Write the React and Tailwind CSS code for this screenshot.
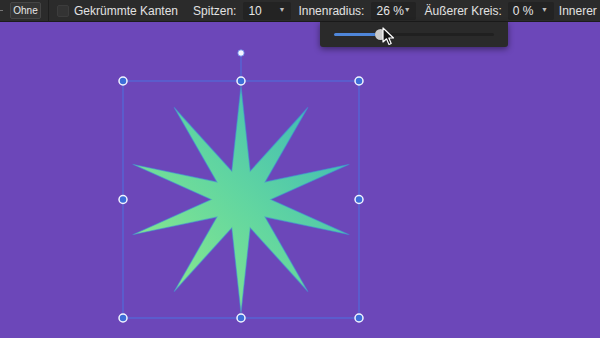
import React from "react";

const CX = 241;
const CY = 199.5 - 22;
const R = 114;
const r = 30;

function starPoints() {
  const pts = [];
  for (let i = 0; i < 20; i++) {
    const a = -Math.PI / 2 + (i * Math.PI) / 10;
    const rad = i % 2 === 0 ? R : r;
    pts.push(`${(CX + rad * Math.cos(a)).toFixed(2)},${(CY + rad * Math.sin(a)).toFixed(2)}`);
  }
  return pts.join(" ");
}

function Field({ value, width }) {
  return (
    <div
      className="flex h-[18px] items-center justify-between rounded-[2px] bg-[#232323] pl-[5px] pr-[6px] text-[12px] text-[#e6e6e6]"
      style={{ width }}
    >
      <span>{value}</span>
      <span className="text-[7px] text-[#bdbdbd]">▼</span>
    </div>
  );
}

export default function App() {
  const handles = [
    [123, 81],
    [241, 81],
    [359, 81],
    [123, 199.5],
    [359, 199.5],
    [123, 318],
    [241, 318],
    [359, 318],
  ];
  return (
    <div
      className="relative flex h-[338px] w-[600px] flex-col overflow-hidden bg-[#6c47b9]"
      style={{ fontFamily: '"Liberation Sans", Arial, sans-serif' }}
    >
      {/* toolbar */}
      <div className="flex h-[22px] shrink-0 items-center whitespace-nowrap border-b border-[#1c1c1c] bg-[#2b2b2b] text-[12px] text-[#e2e2e2]">
        <div className="h-px w-[3px] bg-[#777]" />
        <div className="ml-[7px] flex h-[17px] w-[31px] items-center justify-center rounded-[2px] border border-[#454545] bg-[#343434] text-[10px] text-[#e8e8e8]">
          Ohne
        </div>
        <div className="ml-[7px] h-[22px] w-px bg-[#1e1e1e]" />
        <div className="ml-[8px] h-[12px] w-[12px] rounded-[2px] border border-[#3c3c3c] bg-[#333]" />
        <span className="ml-[5px]">Gekrümmte Kanten</span>
        <span className="ml-[15px]">Spitzen:</span>
        <div className="ml-[7px]">
          <Field value="10" width={48} />
        </div>
        <span className="ml-[7px]">Innenradius:</span>
        <div className="ml-[7px]">
          <Field value="26 %" width={45} />
        </div>
        <span className="ml-[8px]">Äußerer Kreis:</span>
        <div className="ml-[6px]">
          <Field value="0 %" width={46} />
        </div>
        <span className="ml-[5px]">Innerer</span>
      </div>

      {/* canvas */}
      <div className="relative flex-1">
        <svg className="absolute left-0 top-0" width="600" height="316" viewBox="0 0 600 316">
          <defs>
            <linearGradient id="sg" x1="0" y1="1" x2="1" y2="0">
              <stop offset="0" stopColor="#96ee86" />
              <stop offset="0.5" stopColor="#62d6a0" />
              <stop offset="1" stopColor="#36b4bb" />
            </linearGradient>
          </defs>
          <polygon
            points={starPoints()}
            fill="url(#sg)"
            stroke="#3f86d8"
            strokeOpacity="0.55"
            strokeWidth="1.2"
            strokeLinejoin="miter"
          />
          <rect x="123" y={81 - 22} width="236" height="237" fill="none" stroke="#4b72e0" strokeWidth="1" />
          <line x1="241" y1={53 - 22} x2="241" y2={81 - 22} stroke="#4b72e0" strokeWidth="1" />
          <circle cx="241" cy={53 - 22} r="3.2" fill="#f4f6ff" stroke="#5a80e6" strokeWidth="0.8" />
          {handles.map(([x, y], i) => (
            <circle key={i} cx={x} cy={y - 22} r="4" fill="#3d6ed8" stroke="#f2f4ff" strokeWidth="1.5" />
          ))}
        </svg>
      </div>

      {/* slider dropdown */}
      <div className="absolute left-[320px] top-[22px] flex h-[25px] w-[188px] items-center rounded-b-[3px] bg-[#2a2a2a] px-[14px] shadow-[0_2px_6px_rgba(0,0,0,0.45)]">
        <div className="relative h-[3px] flex-1 rounded-full bg-[#202020]">
          <div className="absolute left-0 top-0 h-[3px] w-[46px] rounded-full bg-[#4f86d9]" />
          <div className="absolute left-[41px] top-[-4px] h-[11px] w-[11px] rounded-full bg-[#c9c9c9] shadow-[0_0_1px_rgba(0,0,0,0.6)]" />
        </div>
      </div>

      {/* cursor */}
      <svg className="absolute left-[382px] top-[27px]" width="14" height="20" viewBox="0 0 14 20">
        <path d="M1 1 L1 15 L4.5 11.8 L7 17.5 L9.2 16.5 L6.8 11 L11.5 11 Z" fill="#111" stroke="#fff" strokeWidth="1.2" strokeLinejoin="round" />
      </svg>
    </div>
  );
}
